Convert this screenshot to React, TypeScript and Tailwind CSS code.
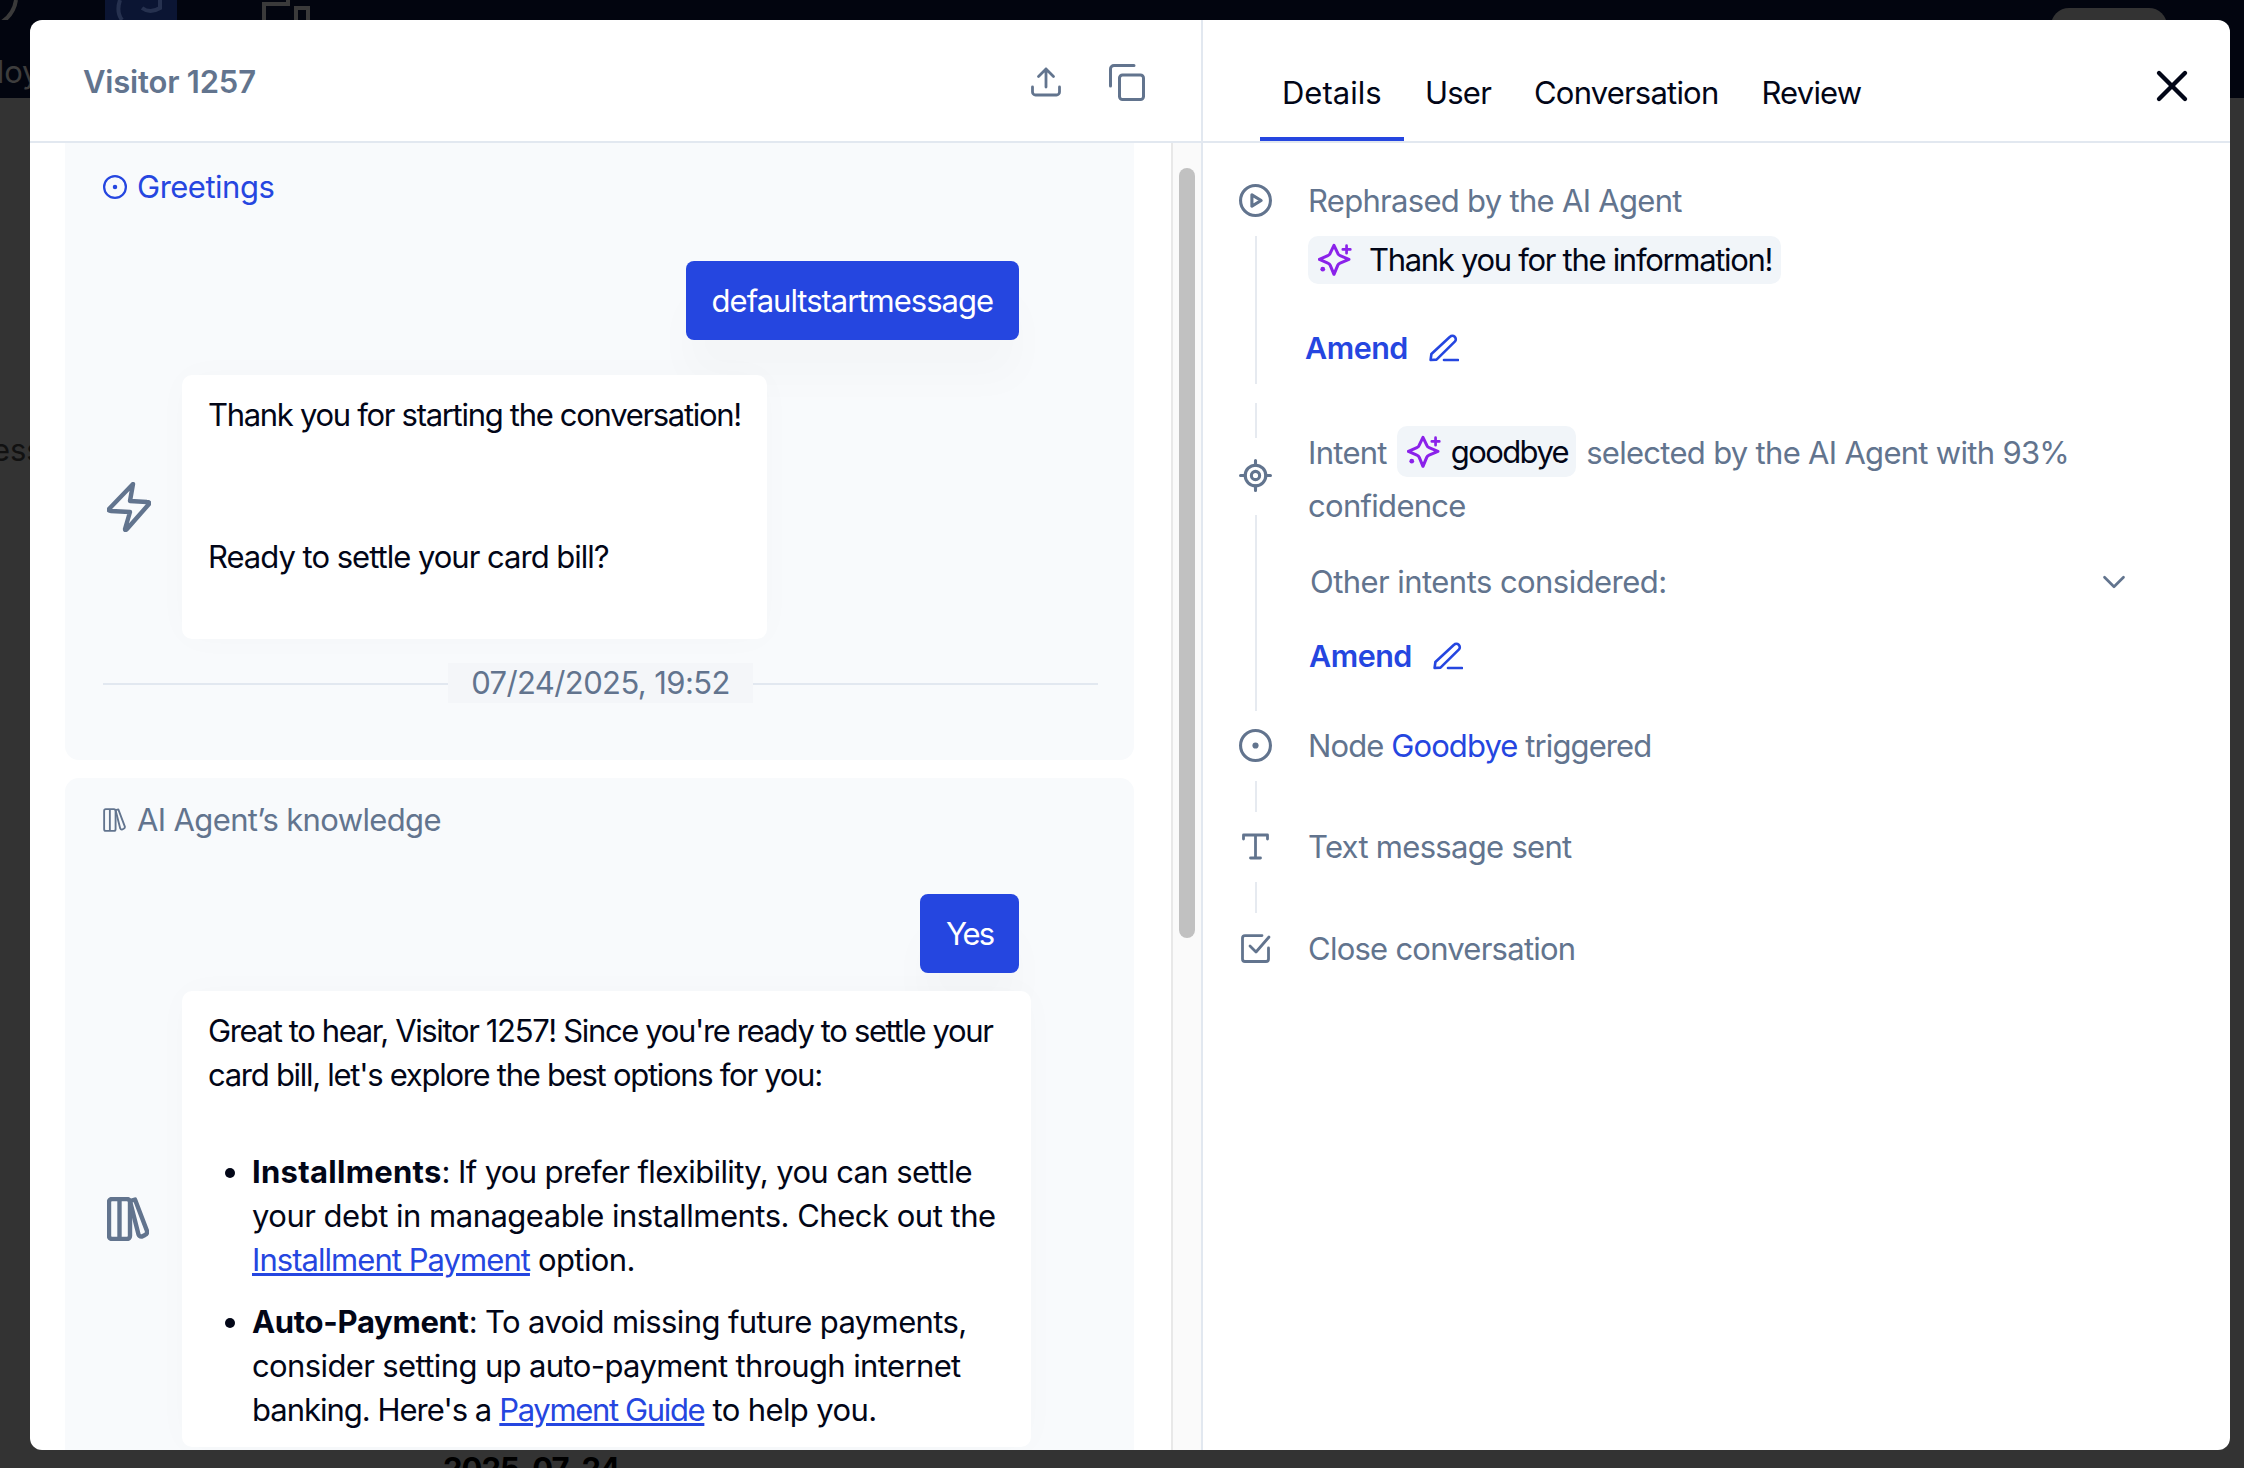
import React from "react";
import { ChevronDown, X } from "lucide-react";

function Sparkle() {
    return (
        <svg viewBox="0 0 100 100" className="w-[34px] h-[34px] shrink-0 text-[#8b22ea]" fill="none" stroke="currentColor">
            <path d="M47 7 L58 30 Q60 35 65 37 L91 48 L65 59 Q60 61 58 66 L47 92 L36 66 Q34 61 29 59 L4 48 L29 37 Q34 35 36 30 Z" strokeWidth="9" strokeLinejoin="round" />
            <path d="M84 8 V30 M73 19 H95" strokeWidth="8" strokeLinecap="round" />
            <circle cx="14" cy="77" r="7" fill="currentColor" stroke="none" />
        </svg>
    );
}

function Pen() {
    return (
        <svg viewBox="0 0 30 28" className="w-[30px] h-[28px]" fill="none" stroke="currentColor" strokeWidth="2.6" strokeLinecap="round" strokeLinejoin="round">
            <path d="M1.6 26 L2.4 20 L21 2.8 a3.4 3.4 0 0 1 5 4.6 L7.5 25.6 Z" />
            <path d="M15 26 H29" />
        </svg>
    );
}

function NodeIcon({ className }: { className: string }) {
    return (
        <svg viewBox="0 0 32 32" className={className} fill="none" stroke="currentColor" strokeWidth="3">
            <circle cx="16" cy="16" r="14.5" />
            <circle cx="16" cy="16" r="3" fill="currentColor" stroke="none" />
        </svg>
    );
}

function PlayIcon() {
    return (
        <svg viewBox="0 0 32 32" className="w-[33px] h-[33px]" fill="none" stroke="currentColor" strokeWidth="3" strokeLinejoin="round">
            <circle cx="16" cy="16" r="14.5" />
            <path d="M12.5 10.5 L21.5 16 L12.5 21.5 Z" />
        </svg>
    );
}

function TargetIcon() {
    return (
        <svg viewBox="0 0 32 32" className="w-[33px] h-[33px]" fill="none" stroke="currentColor" strokeWidth="3" strokeLinecap="round">
            <circle cx="16" cy="16" r="10" />
            <circle cx="16" cy="16" r="4" />
            <path d="M16 1.5 V6 M16 26 V30.5 M1.5 16 H6 M26 16 H30.5" />
        </svg>
    );
}

function TextIcon() {
    return (
        <svg viewBox="0 0 27 27" className="w-[27px] h-[27px]" fill="none" stroke="currentColor" strokeWidth="2.8" strokeLinecap="round" strokeLinejoin="round">
            <path d="M1.5 6 V2 H25.5 V6 M13.5 2 V25 M8.5 25 H18.5" />
        </svg>
    );
}

function CheckIcon() {
    return (
        <svg viewBox="0 0 30 29" className="w-[30px] h-[29px]" fill="none" stroke="currentColor" strokeWidth="2.8" strokeLinecap="round" strokeLinejoin="round">
            <path d="M21 1.6 H4 a2.5 2.5 0 0 0 -2.5 2.5 V25 a2.5 2.5 0 0 0 2.5 2.5 H25 a2.5 2.5 0 0 0 2.5 -2.5 V14" />
            <path d="M9 12 L15 18 L28 3" />
        </svg>
    );
}

function Bolt() {
    return (
        <svg viewBox="0 0 44 50" className="w-[44px] h-[50px] text-slate-500" fill="none" stroke="currentColor" strokeWidth="4.4" strokeLinecap="round" strokeLinejoin="round">
            <path d="M26 2 L2 27 Q1 29 4 29 L23 30 L18 47 Q18 49 20 47 L42 22 Q43 20 40 20 L23 19 Z" />
        </svg>
    );
}

function Books({ className, thick }: { className: string; thick?: boolean }) {
    return (
        <svg viewBox="0 0 42 44" className={className} fill="none" stroke="currentColor" strokeWidth={thick ? 4.4 : 3.4} strokeLinejoin="round">
            <rect x="2" y="2" width="21" height="40" rx="3" />
            <path d="M12.5 2 V42" />
            <path d="M23 4 L28 2.5 L40 34 Q40.5 37 38 38 L35 39.5 Q32.5 40 31.5 37.5 Z" />
        </svg>
    );
}

function Upload() {
    return (
        <svg viewBox="0 0 30 30" className="w-[30px] h-[30px]" fill="none" stroke="currentColor" strokeWidth="2.8" strokeLinecap="round" strokeLinejoin="round">
            <path d="M15 20 V2 M7.5 9.5 L15 2 L22.5 9.5" />
            <path d="M1.5 20 V25 a3 3 0 0 0 3 3 H25.5 a3 3 0 0 0 3 -3 V20" />
        </svg>
    );
}

function Copy() {
    return (
        <svg viewBox="0 0 36 37" className="w-[36px] h-[37px]" fill="none" stroke="currentColor" strokeWidth="3" strokeLinecap="round" strokeLinejoin="round">
            <rect x="10.5" y="11" width="24" height="24.5" rx="3" />
            <path d="M25 1.5 H5 a3.5 3.5 0 0 0 -3.5 3.5 V22" />
        </svg>
    );
}

function TimelineLine({ className }: { className: string }) {
    return <div className={`w-[2px] bg-[#e6eaf0] ${className}`} />;
}

function Amend() {
    return (
        <div className="flex items-center gap-[21px] h-[44px] text-[#2546e0] text-[30.5px] font-semibold tracking-[-0.5px]">
            <span>Amend</span>
            <Pen />
        </div>
    );
}

function UserBubble({ text, tracking }: { text: string; tracking: string }) {
    return (
        <div className="flex justify-end pr-[115px]">
            <div className={`h-[79px] px-[26px] flex items-center rounded-[8px] bg-[#2546e0] text-white shadow-[0_40px_40px_rgba(15,23,42,0.02)] ${tracking}`}>{text}</div>
        </div>
    );
}

export default function App() {
    return (
        <div className="relative w-[2244px] h-[1468px] overflow-hidden bg-[#333333] font-['Inter',sans-serif] text-[31px] leading-[44px] tracking-[-0.2px] text-[#020617]">
            {/* page behind the dialog */}
            <div className="h-[98px] bg-[#02050f]" />
            <div className="absolute left-[105px] top-0 w-[72px] h-[20px] bg-[#0b1533]" />
            <svg className="absolute left-0 top-0 w-[320px] h-[20px]" viewBox="0 0 320 20" fill="none" strokeWidth="4">
                <path d="M16 0 Q14 14 2 22" stroke="#3a3a3a" />
                <path d="M120 0 Q116 12 122 20 M160 0 V8 Q150 14 142 8" stroke="#26314f" />
                <path d="M264 20 V4 H288 V0 M296 20 V8 H308 V20" stroke="#3a3a3a" />
            </svg>
            <div className="absolute left-[2051px] top-[8px] w-[116px] h-[20px] rounded-t-[18px] bg-[#333333]" />
            <div className="absolute left-[-62px] top-[50px] text-[#3d3d3d]">Deploy</div>
            <div className="absolute left-[-26px] top-[428px] text-[#111111]">ness</div>
            <div className="absolute left-[443px] top-[1447px] font-bold tracking-[-1px] text-[#000000]">2025-07-24</div>

            {/* dialog */}
            <div className="absolute left-[30px] top-[20px] w-[2200px] h-[1430px] bg-white rounded-[12px] overflow-hidden flex">
                {/* left pane */}
                <div className="w-[1173px] flex flex-col border-r-2 border-[#e2e8f0]">
                    <div className="h-[123px] shrink-0 border-b-2 border-[#e2e8f0] flex items-center justify-between pl-[53px] pr-[56px] pt-[3px]">
                        <div className="text-slate-500 font-semibold text-[31px]">Visitor 1257</div>
                        <div className="flex items-center gap-[48px] text-slate-500">
                            <Upload />
                            <Copy />
                        </div>
                    </div>
                    <div className="flex-1 flex min-h-0">
                        <div className="w-[1141px] shrink-0 overflow-hidden pl-[35px] pr-[37px]">
                            <div className="-mt-[20px] bg-[#f8fafc] rounded-[14px] pt-[42px] pb-[57px] pl-[38px]">
                                <div className="flex items-center gap-[10px] h-[44px] text-[#2546e0] tracking-[-0.5px]">
                                    <NodeIcon className="w-[24px] h-[24px]" />
                                    <span>Greetings</span>
                                </div>
                                <div className="mt-[52px]">
                                    <UserBubble text="defaultstartmessage" tracking="tracking-[-1px]" />
                                </div>
                                <div className="mt-[35px] flex items-center">
                                    <div className="w-[79px] pl-[4px] text-slate-500"><Bolt /></div>
                                    <div className="w-[585px] bg-white rounded-[10px] pl-[26px] pt-[18px] pb-[60px] whitespace-nowrap shadow-[0_0_36px_rgba(15,23,42,0.02)]">
                                        <p className="tracking-[-1.3px]">Thank you for starting the conversation!</p>
                                        <p className="mt-[98px] tracking-[-1px]">Ready to settle your card bill?</p>
                                    </div>
                                </div>
                                <div className="relative mt-[24px] mr-[36px] h-[40px] flex justify-center">
                                    <div className="absolute left-0 right-0 top-[20px] h-[2px] bg-[#e2e8f0]" />
                                    <div className="relative w-[305px] bg-[#f4f6f9] text-slate-500 text-center leading-[40px] tracking-[-0.6px]">07/24/2025, 19:52</div>
                                </div>
                            </div>

                            <div className="mt-[18px] h-[700px] bg-[#f8fafc] rounded-[14px] pt-[20px] pl-[38px]">
                                <div className="flex items-center gap-[11px] h-[44px] text-slate-500 tracking-[-0.63px]">
                                    <Books className="w-[23px] h-[24px]" />
                                    <span>AI Agent’s knowledge</span>
                                </div>
                                <div className="mt-[52px]">
                                    <UserBubble text="Yes" tracking="tracking-[-2px]" />
                                </div>
                                <div className="mt-[18px] flex items-center">
                                    <div className="w-[79px] pl-[4px] text-slate-500">
                                        <Books className="w-[42px] h-[44px]" thick />
                                    </div>
                                    <div className="w-[849px] bg-white rounded-[10px] pl-[26px] pr-[30px] pt-[18px] pb-[15px] shadow-[0_0_36px_rgba(15,23,42,0.02)]">
                                        <p className="tracking-[-1.28px]">
                                            <span className="tracking-[-1.36px]">Great to hear, Visitor 1257! Since you're ready to settle your</span> card bill, let's explore the best options for you:
                                        </p>
                                        <ul className="mt-[53px] pl-[44px] list-disc tracking-[-0.62px]">
                                            <li>
                                                <b className="tracking-[0.28px]">Installments</b>: If you prefer flexibility, you can settle{" "}
                                                <span className="tracking-[-0.5px]">your debt in manageable installments. Check out the</span>{" "}
                                                <a className="text-[#2546e0] underline tracking-[-0.95px]">Installment Payment</a> option.
                                            </li>
                                            <li className="mt-[18px]">
                                                <b className="tracking-[-0.3px]">Auto-Payment</b>: To avoid missing future payments, consider setting up auto-payment through internet{" "}
                                                <span className="tracking-[-1px]">banking. Here's a</span>{" "}
                                                <a className="text-[#2546e0] underline tracking-[-1.35px]">Payment Guide</a> to help you.
                                            </li>
                                        </ul>
                                    </div>
                                </div>
                            </div>
                        </div>
                        <div className="flex-1 bg-[#fafafa] border-l-2 border-[#e8e8e8] pl-[6px] pt-[25px]">
                            <div className="w-[16px] h-[770px] rounded-full bg-[#c1c1c1]" />
                        </div>
                    </div>
                </div>

                {/* right pane */}
                <div className="flex-1 flex flex-col min-w-0">
                    <div className="h-[123px] shrink-0 border-b-2 border-[#e2e8f0] flex items-end justify-between pl-[57px] pr-[32px]">
                        <div className="flex">
                            <div className="h-[80px] pl-[22px] pr-[22px] pt-[10px] border-b-4 border-[#2546e0] tracking-[0px]">Details</div>
                            {["User", "Conversation", "Review"].map((tab) => (
                                <div key={tab} className="h-[80px] px-[21.5px] pt-[10px] tracking-[-0.8px]">{tab}</div>
                            ))}
                        </div>
                        <X className="w-[52px] h-[52px] mb-[29px] text-[#020617]" strokeWidth={2} />
                    </div>

                    <div className="pl-[36px] pt-[41px] text-slate-500 tracking-[-0.7px]">
                        {/* rephrased */}
                        <div className="flex h-[200px]">
                            <div className="w-[33px] flex flex-col items-center">
                                <PlayIcon />
                                <TimelineLine className="mt-[19px] flex-1" />
                            </div>
                            <div className="ml-[36px]">
                                <div className="h-[33px] leading-[33px]">Rephrased by the AI Agent</div>
                                <div className="mt-[19px] h-[48px] inline-flex items-center gap-[17px] pl-[10px] pr-[9px] rounded-[10px] bg-[#f1f5f9] text-[#020617] tracking-[-1.3px]">
                                    <Sparkle />
                                    <span>Thank you for the information!</span>
                                </div>
                                <div className="-ml-[3px] mt-[38px]"><Amend /></div>
                            </div>
                        </div>

                        {/* intent */}
                        <div className="flex mt-[19px] h-[308px]">
                            <div className="w-[33px] flex flex-col items-center">
                                <TimelineLine className="h-[35px]" />
                                <div className="mt-[21px]"><TargetIcon /></div>
                                <TimelineLine className="mt-[23px] flex-1" />
                            </div>
                            <div className="ml-[36px] w-[840px]">
                                <div className="mt-[23px] leading-[53px]">
                                    Intent{" "}
                                    <span className="inline-flex items-center align-middle h-[51px] -my-[4px] gap-[10px] pl-[10px] pr-[8px] mx-[2px] rounded-[10px] bg-[#f1f5f9] text-[#020617] tracking-[-1.6px] -translate-y-[4px]">
                                        <Sparkle />
                                        goodbye
                                    </span>{" "}
                                    selected by the AI Agent with 93% confidence
                                </div>
                                <div className="mt-[28px] h-[44px] pl-[2px] flex items-center justify-between pr-[15px] tracking-[-0.55px]">
                                    <span>Other intents considered:</span>
                                    <ChevronDown className="w-[38px] h-[38px]" strokeWidth={1.7} />
                                </div>
                                <div className="mt-[30px] ml-[1px]"><Amend /></div>
                            </div>
                        </div>

                        {/* node */}
                        <div className="flex mt-[18px] h-[83px]">
                            <div className="w-[33px] flex flex-col items-center">
                                <NodeIcon className="w-[33px] h-[33px]" />
                                <TimelineLine className="mt-[19px] flex-1" />
                            </div>
                            <div className="ml-[36px] h-[33px] leading-[33px] tracking-[-0.9px]">
                                Node <span className="text-[#2546e0]">Goodbye</span> triggered
                            </div>
                        </div>

                        {/* text */}
                        <div className="flex mt-[21px] h-[80px]">
                            <div className="w-[33px] flex flex-col items-center">
                                <TextIcon />
                                <TimelineLine className="mt-[22px] flex-1" />
                            </div>
                            <div className="ml-[36px] h-[27px] leading-[27px]">Text message sent</div>
                        </div>

                        {/* close */}
                        <div className="flex mt-[21px]">
                            <div className="w-[33px] flex justify-center"><CheckIcon /></div>
                            <div className="ml-[36px] h-[29px] leading-[29px] tracking-[-0.75px]">Close conversation</div>
                        </div>
                    </div>
                </div>
            </div>
        </div>
    );
}
